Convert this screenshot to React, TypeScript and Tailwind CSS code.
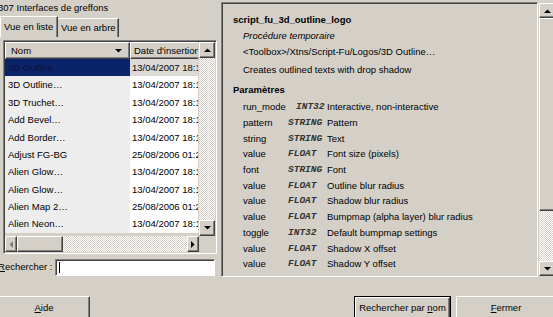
import React from "react";

const raised =
  "border border-t-white border-l-white border-r-[#404040] border-b-[#404040] shadow-[inset_-1px_-1px_0_#808080] bg-[#d4d0c8]";
const sunken =
  "border border-t-[#808080] border-l-[#808080] border-r-white border-b-white shadow-[inset_1px_1px_0_#404040]";
const track =
  "bg-[repeating-conic-gradient(#d4d0c8_0%_25%,#ffffff_0%_50%)] bg-[length:2px_2px]";

function Tri({ dir, disabled }: { dir: "up" | "down" | "left" | "right"; disabled?: boolean }) {
  const pts: Record<string, string> = {
    up: "0,4 7,4 3.5,0.5",
    down: "0,0 7,0 3.5,3.5",
    left: "4,0 4,7 0.5,3.5",
    right: "0,0 0,7 3.5,3.5",
  };
  const vertical = dir === "up" || dir === "down";
  return (
    <svg width={vertical ? 7 : 4} height={vertical ? 4 : 7} viewBox={vertical ? "0 0 7 4" : "0 0 4 7"}>
      <polygon points={pts[dir]} fill={disabled ? "#808080" : "#000"} />
    </svg>
  );
}

function ArrowBtn({
  dir,
  disabled,
  cls,
}: {
  dir: "up" | "down" | "left" | "right";
  disabled?: boolean;
  cls: string;
}) {
  return (
    <div className={`${raised} ${cls} flex items-center justify-center shrink-0`}>
      <Tri dir={dir} disabled={disabled} />
    </div>
  );
}

const rows: [string, string][] = [
  ["3D Outline…", "13/04/2007 18:15"],
  ["3D Outline…", "13/04/2007 18:15"],
  ["3D Truchet…", "13/04/2007 18:15"],
  ["Add Bevel…", "13/04/2007 18:15"],
  ["Add Border…", "13/04/2007 18:15"],
  ["Adjust FG-BG", "25/08/2006 01:24"],
  ["Alien Glow…", "13/04/2007 18:15"],
  ["Alien Glow…", "13/04/2007 18:15"],
  ["Alien Map 2…", "25/08/2006 01:24"],
  ["Alien Neon…", "13/04/2007 18:15"],
];

const params: [string, string, string][] = [
  ["run_mode", "INT32", "Interactive, non-interactive"],
  ["pattern", "STRING", "Pattern"],
  ["string", "STRING", "Text"],
  ["value", "FLOAT", "Font size (pixels)"],
  ["font", "STRING", "Font"],
  ["value", "FLOAT", "Outline blur radius"],
  ["value", "FLOAT", "Shadow blur radius"],
  ["value", "FLOAT", "Bumpmap (alpha layer) blur radius"],
  ["toggle", "INT32", "Default bumpmap settings"],
  ["value", "FLOAT", "Shadow X offset"],
  ["value", "FLOAT", "Shadow Y offset"],
  ["value", "FLOAT", "Shadow Y offset"],
];

export default function App() {
  return (
    <div className="w-[553px] h-[317px] overflow-hidden bg-[#d4d0c8] text-black text-[9.5px] font-['Liberation_Sans',sans-serif] leading-none">
      <div className="flex h-[278px]">
        {/* Left column */}
        <div className="w-[218px] shrink-0 flex flex-col">
          <div className="h-[15px] flex items-center -ml-[2px] whitespace-nowrap">307 Interfaces de greffons</div>
          <div className="h-[22px] flex items-end">
            <div className="h-[21px] w-[58px] shrink-0 border-t border-l border-t-white border-l-white border-r border-r-[#404040] shadow-[inset_-1px_0_0_#808080] flex items-center pl-[3px] whitespace-nowrap">
              Vue en liste
            </div>
            <div className="h-[19px] w-[61px] shrink-0 border-t border-t-white border-r border-r-[#404040] shadow-[inset_-1px_0_0_#808080] flex items-center pl-[3px] whitespace-nowrap">
              Vue en arbre
            </div>
          </div>
          <div className={`${sunken} mt-[3px] ml-[3px] w-[214px] h-[214px] flex flex-col overflow-hidden`}>
            <div className="flex flex-1 min-h-0 pl-[1px] pt-[1px]">
              <div className="w-[193px] overflow-hidden flex flex-col">
                <div className="flex h-[17px] shrink-0">
                  <div className={`${raised} w-[125px] shrink-0 flex items-center pl-[5px] pr-[7px] justify-between`}>
                    <span>Nom</span>
                    <Tri dir="down" />
                  </div>
                  <div className={`${raised} w-[80px] shrink-0 flex items-center pl-[3px] whitespace-nowrap`}>
                    Date d'insertion
                  </div>
                </div>
                {rows.map(([n, d], i) => (
                  <div key={i} className="flex h-[17.4px] shrink-0">
                    <div
                      className={`w-[125px] shrink-0 flex items-center pl-[3px] whitespace-nowrap ${
                        i === 0 ? "bg-[#0a246a] text-[#10103a]" : "bg-[#ededed]"
                      }`}
                    >
                      {n}
                    </div>
                    <div
                      className={`w-[80px] shrink-0 flex items-center pl-[2px] whitespace-nowrap ${
                        i === 0 ? "bg-[#dcdad5]" : "bg-white"
                      }`}
                    >
                      {d}
                    </div>
                  </div>
                ))}
              </div>
              <div className="w-[16px] flex flex-col shrink-0 ml-[1px]">
                <ArrowBtn dir="up" cls="h-[16px] w-[16px]" />
                <div className={`${track} flex-1`} />
                <ArrowBtn dir="down" cls="h-[16px] w-[16px]" />
              </div>
            </div>
            <div className="flex h-[16px] shrink-0 pl-[1px] mb-[1px]">
              <ArrowBtn dir="left" disabled cls="h-[16px] w-[12px]" />
              <div className={`${raised} h-[16px] w-[46px] shrink-0`} />
              <div className={`${track} flex-1 h-[16px]`} />
              <ArrowBtn dir="right" cls="h-[16px] w-[12px]" />
              <div className="w-[17px] shrink-0" />
            </div>
          </div>
          <div className="mt-[4px] h-[18px] flex items-center">
            <span className="w-[57px] -ml-[2px] shrink-0 whitespace-nowrap">
              <span className="underline">R</span>echercher :
            </span>
            <div className={`${sunken} bg-white w-[160px] h-[17px] flex items-center pl-[3px]`}>
              <div className="w-[1px] h-[11px] bg-black" />
            </div>
          </div>
        </div>

        {/* Right column */}
        <div className="ml-[3px] mt-[2px] flex h-[275px]">
          <div className={`${sunken} w-[317px] h-[275px] overflow-hidden pl-[11px] pt-[9px]`}>
            <div className="h-[16px] flex items-center font-bold whitespace-nowrap">script_fu_3d_outline_logo</div>
            <div className="h-[15px] flex items-center italic pl-[10px]">Procédure temporaire</div>
            <div className="h-[18px] flex items-center pl-[10px] whitespace-nowrap">
              &lt;Toolbox&gt;/Xtns/Script-Fu/Logos/3D Outline…
            </div>
            <div className="h-[18px] flex items-center pl-[10px] whitespace-nowrap">Creates outlined texts with drop shadow</div>
            <div className="h-[19px] mt-[1px] flex items-center font-bold">Paramètres</div>
            {params.map(([n, t, d], i) => (
              <div key={i} className="h-[15.73px] flex items-center pl-[10px] whitespace-nowrap">
                <span className="w-[45px] shrink-0">{n}</span>
                <span
                  className={`w-[39px] shrink-0 italic font-bold text-[#333] font-['Liberation_Mono',monospace] text-[9.5px] ${
                    i === 0 ? "pl-[8px]" : ""
                  }`}
                >
                  {t}
                </span>
                <span>{d}</span>
              </div>
            ))}
          </div>
          <div className="ml-[1px] w-[16px] flex flex-col h-[274px]">
            <ArrowBtn dir="up" cls="h-[15px] w-[16px] mt-[1px]" />
            <div className={`${raised} h-[193px] shrink-0`} />
            <div className={`${track} flex-1`} />
            <ArrowBtn dir="down" cls="h-[15px] w-[16px]" />
          </div>
        </div>
      </div>

      {/* Buttons */}
      <div className="mt-[18px] flex h-[24px]">
        <div className={`${raised} w-[92px] shrink-0 -ml-[2px] flex items-center justify-center`}>
          <span>
            <span className="underline">A</span>ide
          </span>
        </div>
        <div className="ml-[264px] w-[97px] shrink-0 border border-black">
          <div className={`${raised} h-full flex items-center justify-center whitespace-nowrap`}>
            <span>
              Rechercher par <span className="underline">n</span>om
            </span>
          </div>
        </div>
        <div className={`${raised} ml-[5px] w-[100px] shrink-0 flex items-center justify-center`}>
          <span>
            <span className="underline">F</span>ermer
          </span>
        </div>
      </div>
    </div>
  );
}
